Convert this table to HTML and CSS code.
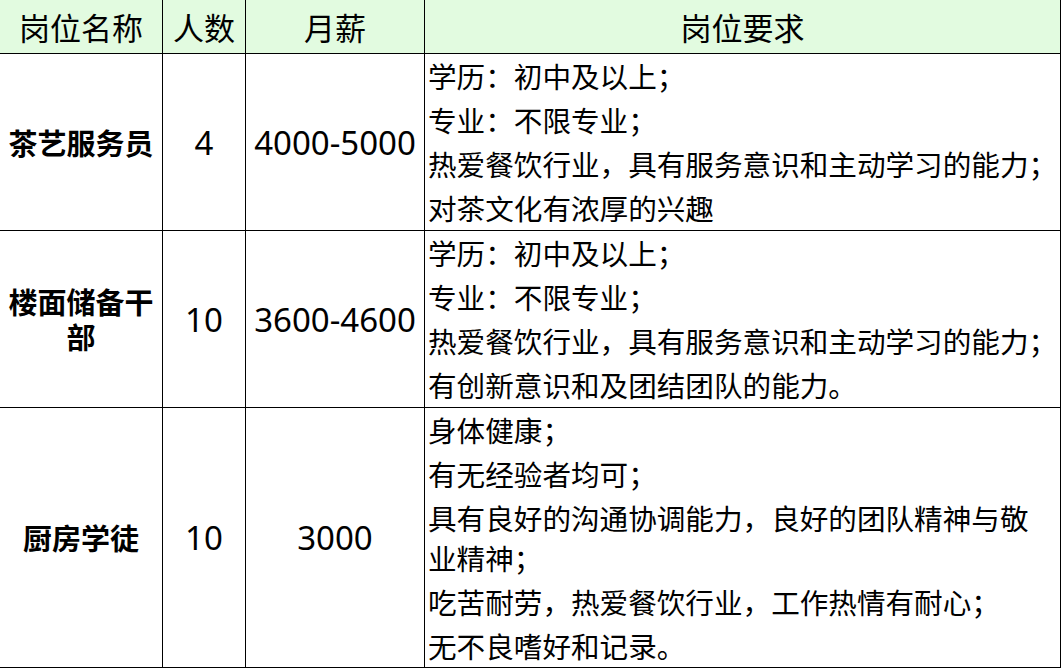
FILE: index.html
```html
<!DOCTYPE html>
<html lang="zh-CN">
<head>
<meta charset="utf-8">
<title>岗位</title>
<link rel="stylesheet" href="styles.css">
</head>
<body>
<div class="sheet">
  <div class="cell head">岗位名称</div>
  <div class="cell head">人数</div>
  <div class="cell head">月薪</div>
  <div class="cell head">岗位要求</div>

  <div class="cell name">茶艺服务员</div>
  <div class="cell num">4</div>
  <div class="cell num">4000-5000</div>
  <div class="cell req">
    <div class="line">学历：初中及以上；</div>
    <div class="line">专业：不限专业；</div>
    <div class="line">热爱餐饮行业，具有服务意识和主动学习的能力；</div>
    <div class="line">对茶文化有浓厚的兴趣</div>
  </div>

  <div class="cell name">楼面储备干部</div>
  <div class="cell num">10</div>
  <div class="cell num">3600-4600</div>
  <div class="cell req">
    <div class="line">学历：初中及以上；</div>
    <div class="line">专业：不限专业；</div>
    <div class="line">热爱餐饮行业，具有服务意识和主动学习的能力；</div>
    <div class="line">有创新意识和及团结团队的能力。</div>
  </div>

  <div class="cell name">厨房学徒</div>
  <div class="cell num">10</div>
  <div class="cell num">3000</div>
  <div class="cell req">
    <div class="line">身体健康；</div>
    <div class="line">有无经验者均可；</div>
    <div class="line">具有良好的沟通协调能力，良好的团队精神与敬</div>
    <div class="line tight">业精神；</div>
    <div class="line">吃苦耐劳，热爱餐饮行业，工作热情有耐心；</div>
    <div class="line">无不良嗜好和记录。</div>
  </div>
</div>
</body>
</html>
```

FILE: styles.css
```css
html, body {
  margin: 0;
  padding: 0;
  background: #ffffff;
}

body {
  font-family: "Noto Sans CJK SC", "Noto Sans", sans-serif;
  color: #000000;
}

.sheet {
  display: grid;
  grid-template-columns: 163px 83px 179px 636px;
  grid-template-rows: 54px 177px 177px 260px;
  width: 1061px;
}

.cell {
  box-sizing: border-box;
  border-right: 1px solid #000000;
  border-bottom: 1px solid #000000;
  display: flex;
  align-items: center;
  justify-content: center;
  text-align: center;
  min-width: 0;
}

.head {
  background: #e2fbe0;
  font-size: 31px;
  line-height: 40px;
}

.name {
  font-weight: bold;
  font-size: 29px;
  line-height: 35px;
  padding: 0 2px;
}

.num {
  font-family: "Noto Sans", "Noto Sans CJK SC", sans-serif;
  font-size: 33px;
}

.req {
  display: block;
  text-align: left;
  font-size: 28.6px;
  line-height: 44px;
  padding-left: 3px;
}

.line {
  white-space: nowrap;
}

.line.tight {
  margin-top: -4px;
}
```
